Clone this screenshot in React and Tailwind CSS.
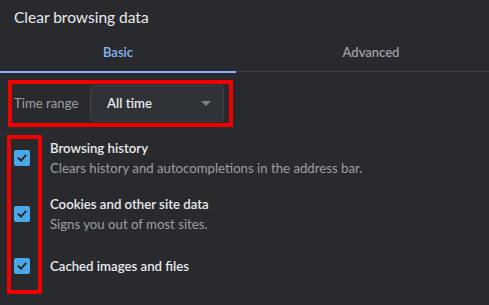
export default function App() {
  const font = { fontFamily: 'Lato, "Noto Sans", sans-serif' };
  const Check = () => (
    <div className="w-4 h-4 rounded-[2px] bg-[#4aa8e6] flex items-center justify-center shrink-0">
      <svg width="12" height="12" viewBox="0 0 12 12" fill="none">
        <path d="M2.5 6.2 L5 8.6 L9.6 3.6" stroke="#202124" strokeWidth="1.8" strokeLinecap="square" strokeLinejoin="miter" />
      </svg>
    </div>
  );
  return (
    <div className="w-[489px] h-[305px] bg-[#292a2d] overflow-hidden text-[#e8eaed]" style={font}>
      <div className="pl-[14px] pt-[7px] text-[15.5px] leading-5">Clear browsing data</div>
      <div className="flex mt-[7px] h-[39px] w-[506px]">
        <div className="w-[236px] flex items-center justify-center text-[13px] font-semibold text-[#8ab4f8] border-b-2 border-[#8ab4f8]">Basic</div>
        <div className="flex-1 flex flex-col">
          <div className="flex-1 flex items-center justify-center text-[13px] font-semibold text-[#9aa0a6]">Advanced</div>
          <div className="h-px bg-[#3c4043] mb-px"></div>
        </div>
      </div>
      <div className="ml-[8px] mt-[7px] w-[225px] h-[47px] border-4 border-[#f00000] flex items-center">
        <div className="pl-[2px] w-[78px] text-[13.2px] text-[#9aa0a6]">Time range</div>
        <div className="w-[134px] h-[37px] rounded-[4px] bg-[#2f3338] border border-[#3c4045] flex items-center justify-between pl-[16px] pr-[12px]">
          <span className="text-[13.2px] font-semibold text-[#e8eaed]">All time</span>
          <svg width="10" height="5" viewBox="0 0 10 5"><path d="M0 0 L10 0 L5 5 Z" fill="#7f8286" /></svg>
        </div>
      </div>
      <div className="relative mt-[11px]">
        <div className="absolute left-[7px] top-[-3px] w-[35px] h-[159px] border-4 border-[#f00000]"></div>
        <div className="flex items-center h-[40px] pl-[14px] gap-[20px]">
          <Check />
          <div className="text-[13.2px] leading-5">
            <div className="font-semibold text-[#e8eaed]">Browsing history</div>
            <div className="text-[#9aa0a6]">Clears history and autocompletions in the address bar.</div>
          </div>
        </div>
        <div className="flex items-center h-[40px] pl-[14px] gap-[20px] mt-[16px]">
          <Check />
          <div className="text-[13.2px] leading-5">
            <div className="font-semibold text-[#e8eaed]">Cookies and other site data</div>
            <div className="text-[#9aa0a6]">Signs you out of most sites.</div>
          </div>
        </div>
        <div className="flex items-center h-[20px] pl-[14px] gap-[20px] mt-[22px]">
          <Check />
          <div className="text-[13.2px] leading-5 font-semibold text-[#e8eaed]">Cached images and files</div>
        </div>
      </div>
    </div>
  );
}
